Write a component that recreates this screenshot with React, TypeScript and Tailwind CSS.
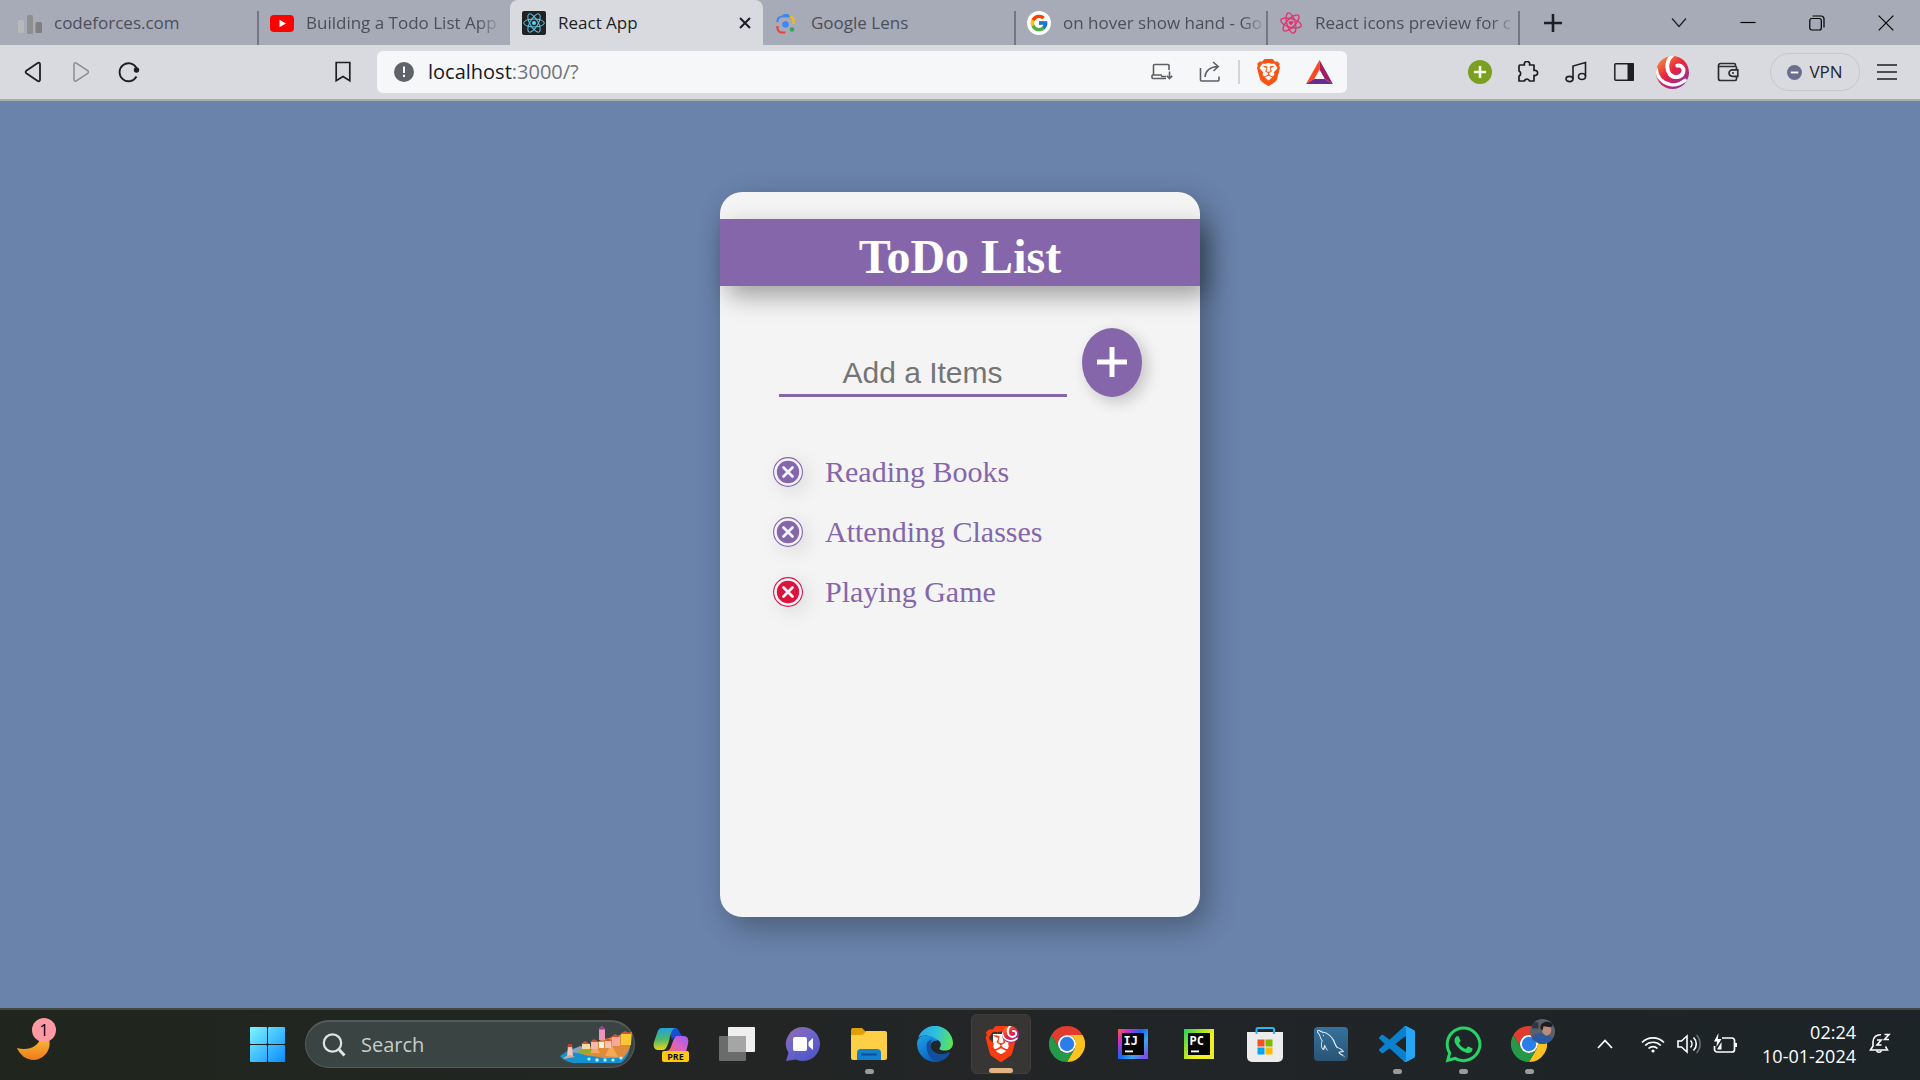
import React, { useState } from "react";
import { FcGoogle } from "react-icons/fc";
import { SiBrave } from "react-icons/si";
import { FaWhatsapp } from "react-icons/fa";
import { GrMysql } from "react-icons/gr";

type IconProps = { className?: string };

/* ---------- Favicons ---------- */

function BarsFavicon() {
  return (
    <svg viewBox="0 0 24 24" className="size-6">
      <rect x="0" y="9" width="6" height="13" rx="1.5" fill="#b9b9b9" />
      <rect x="9" y="4" width="6" height="19" rx="1.5" fill="#8f8f8f" />
      <rect x="17.5" y="11" width="6.5" height="11" rx="1.5" fill="#7f7f7f" />
    </svg>
  );
}

function YoutubeFavicon() {
  return (
    <svg viewBox="0 0 24 24" className="size-6">
      <rect x="0" y="4" width="24" height="17" rx="4" fill="#ff0000" />
      <path d="M9.5 8.8 16 12.500l-6.5 3.7z" fill="#fff" />
    </svg>
  );
}

function ReactFavicon() {
  return (
    <svg viewBox="0 0 24 24" className="size-6">
      <rect width="24" height="24" rx="2" fill="#222" />
      <g fill="none" stroke="#5fc9e8" strokeWidth="1">
        <ellipse cx="12" cy="12" rx="10.3" ry="4" />
        <ellipse cx="12" cy="12" rx="10.3" ry="4" transform="rotate(60 12 12)" />
        <ellipse cx="12" cy="12" rx="10.3" ry="4" transform="rotate(120 12 12)" />
      </g>
      <circle cx="12" cy="12" r="2" fill="#5fd4f4" />
    </svg>
  );
}

function LensFavicon() {
  return (
    <svg viewBox="0 0 24 24" className="size-6">
      <g fill="none" strokeWidth="2.2">
        <path d="M2.500 11V10a4.500 4.500 0 0 1 4.500-4.500H15" stroke="#4285f4" />
        <path d="M14.500 5.500A4.500 4.500 0 0 1 18.500 10v3" stroke="#fbbc04" />
        <path d="M2.500 15v2a4.500 4.500 0 0 0 4.500 4.500H10.500" stroke="#ea4335" />
      </g>
      <path d="M6.500 6 8.500 3h4.500l2 3z" fill="#4285f4" />
      <circle cx="10.500" cy="13.500" r="3.300" fill="#4285f4" />
      <circle cx="17" cy="18.500" r="2.300" fill="#34a853" />
    </svg>
  );
}

function GoogleFavicon() {
  return (
    <span className="flex size-6 items-center justify-center rounded-full bg-white">
      <FcGoogle className="size-5" />
    </span>
  );
}

function PinkAtomFavicon() {
  return (
    <svg viewBox="0 0 24 24" className="size-6">
      <g fill="none" stroke="#e0336f" strokeWidth="1.300" transform="rotate(15 12 12)">
        <ellipse cx="12" cy="12" rx="10.500" ry="4.200" />
        <ellipse cx="12" cy="12" rx="10.500" ry="4.200" transform="rotate(60 12 12)" />
        <ellipse cx="12" cy="12" rx="10.500" ry="4.200" transform="rotate(120 12 12)" />
      </g>
      <path d="M12 14.300 9.900 12.200a1.300 1.300 0 0 1 2.100-1.600 1.300 1.300 0 0 1 2.100 1.600z" fill="#e0336f" />
    </svg>
  );
}

/* ---------- Browser chrome ---------- */

type Tab = { title: string; icon: React.ReactNode; active?: boolean; divider?: boolean; long?: boolean };

const tabs: Tab[] = [
  { title: "codeforces.com", icon: <BarsFavicon />, divider: true },
  { title: "Building a Todo List App", icon: <YoutubeFavicon />, long: true },
  { title: "React App", icon: <ReactFavicon />, active: true },
  { title: "Google Lens", icon: <LensFavicon />, divider: true },
  { title: "on hover show hand - Go", icon: <GoogleFavicon />, divider: true, long: true },
  { title: "React icons preview for c", icon: <PinkAtomFavicon />, divider: true, long: true },
];

function TabStrip() {
  return (
    <div className="flex h-[45px] shrink-0 bg-[#a7abb8] pl-1.5">
      <div role="tablist" className="flex min-w-0">
        {tabs.map((tab) => (
          <div
            key={tab.title}
            className={
              tab.active
                ? "flex w-[253px] min-w-0 items-center rounded-t-lg bg-[#d9dadf] pr-2 pl-3"
                : "relative flex w-[252px] min-w-0 items-center pr-1 pl-3"
            }
          >
            <button role="tab" aria-selected={!!tab.active} className="flex min-w-0 flex-1 items-center gap-3 text-left">
              <span className="shrink-0">{tab.icon}</span>
              <span
                className={
                  tab.long
                    ? "text-[17px] leading-6 whitespace-nowrap text-[#4c4f58] [mask-image:linear-gradient(to_right,#000_90%,rgba(0,0,0,0.2))]"
                    : tab.active
                      ? "text-[17px] leading-6 font-medium whitespace-nowrap text-[#1d1f25]"
                      : "text-[17px] leading-6 whitespace-nowrap text-[#4c4f58]"
                }
              >
                {tab.title}
              </span>
            </button>
            {tab.active && (
              <button aria-label="Close tab" className="flex size-5 items-center justify-center">
                <svg viewBox="0 0 12 12" className="size-3">
                  <path d="M1 1l10 10M11 1 1 11" stroke="#1d1f25" strokeWidth="2" />
                </svg>
              </button>
            )}
            {tab.divider && <span className="absolute -right-px bottom-0 h-[34px] w-0.5 bg-[#737782]" />}
          </div>
        ))}
      </div>
      <button aria-label="New tab" className="ml-2.5 flex w-12 items-center justify-center">
        <svg viewBox="0 0 18 18" className="size-[18px]">
          <path d="M9 0v18M0 9h18" stroke="#1d1f25" strokeWidth="2.600" />
        </svg>
      </button>
      <div className="ml-auto flex">
        <button aria-label="Search tabs" className="flex w-[69px] items-center justify-center">
          <svg viewBox="0 0 16 16" className="size-4" fill="none" stroke="#1d1f25" strokeWidth="1.200">
            <path d="m1 3.500 7 8 7-8" />
          </svg>
        </button>
        <button aria-label="Minimize" className="flex w-[69px] items-center justify-center">
          <svg viewBox="0 0 16 16" className="size-4" stroke="#000" strokeWidth="1.200">
            <path d="M.5 7.500h15" />
          </svg>
        </button>
        <button aria-label="Restore" className="flex w-[69px] items-center justify-center">
          <svg viewBox="0 0 16 16" className="size-4" fill="none" stroke="#000" strokeWidth="1.200">
            <rect x=".8" y="3.500" width="11.500" height="11.500" rx="2" />
            <path d="M3.500 1h8.500a3 3 0 0 1 3 3v8.500" />
          </svg>
        </button>
        <button aria-label="Close" className="flex w-[69px] items-center justify-center">
          <svg viewBox="0 0 16 16" className="size-4" stroke="#000" strokeWidth="1.200">
            <path d="M.7.7l14.600 14.600M15.300.7.7 15.300" />
          </svg>
        </button>
      </div>
    </div>
  );
}

function ToolButton({ label, children, className }: { label: string; children: React.ReactNode; className: string }) {
  return (
    <button aria-label={label} className={className}>
      {children}
    </button>
  );
}

const slot = "flex h-10 w-12 shrink-0 items-center justify-center";

function TriangleAd() {
  return (
    <svg viewBox="0 0 28 26" className="h-[25px] w-[27px]">
      <path d="M14 0 0 25l8.500-5.200L14 10z" fill="#ff4724" />
      <path d="M14 0l14 25-8.500-5.200L14 10z" fill="#9e1f63" />
      <path d="M0 25h28l-8.500-5.200h-11z" fill="#662d91" />
    </svg>
  );
}

function Swirl({ className }: IconProps) {
  return (
    <svg viewBox="0 0 34 34" className={className}>
      <defs>
        <linearGradient id="swirl" x1="0" y1="0" x2=".8" y2="1">
          <stop offset="0" stopColor="#f9a13b" />
          <stop offset=".5" stopColor="#e8243f" />
          <stop offset="1" stopColor="#8c2fa8" />
        </linearGradient>
        <clipPath id="swirlclip">
          <circle cx="17" cy="17" r="17" />
        </clipPath>
      </defs>
      <g clipPath="url(#swirlclip)">
        <rect width="34" height="34" fill="url(#swirl)" />
        <g fill="none" stroke="#fff" strokeLinecap="round">
          <path d="M17-1C11 4 10 13 14 18.500c4 5 12 4 14-1.500 1.500-5-2.500-8-6-7" strokeWidth="4" />
          <path d="M0 13c1 9 7 15 15 16.500 5 .8 10-.5 15-4.500" strokeWidth="3.500" />
        </g>
      </g>
    </svg>
  );
}

function Toolbar() {
  return (
    <div className="flex h-14 shrink-0 items-center border-b-2 border-[#a9abb0] bg-[#d9dadf] pr-2.5 pl-[9px]">
      <ToolButton label="Back" className={slot}>
        <svg viewBox="0 0 18 22" className="h-[22px] w-[18px]" fill="none" stroke="#1d1f25" strokeWidth="1.800">
          <path d="M16 3.200v15.600c0 1.400-1.300 1.900-2.300 1.100L2.300 12.300a1.600 1.600 0 0 1 0-2.600L13.700 2.100c1-.8 2.300-.3 2.300 1.100z" />
        </svg>
      </ToolButton>
      <ToolButton label="Forward" className={slot}>
        <svg viewBox="0 0 18 22" className="h-[22px] w-[18px]" fill="none" stroke="#8b8d93" strokeWidth="1.500">
          <path d="M2 3.200v15.600c0 1.400 1.300 1.900 2.300 1.100l11.400-7.600a1.600 1.600 0 0 0 0-2.600L4.300 2.100C3.300 1.300 2 1.800 2 3.200z" />
        </svg>
      </ToolButton>
      <ToolButton label="Reload" className={slot}>
        <svg viewBox="0 0 22 22" className="size-[22px]">
          <path d="M18.500 15.500A9 9 0 1 1 18.500 7" fill="none" stroke="#1d1f25" strokeWidth="1.800" />
          <circle cx="18.500" cy="9" r="2.700" fill="#1d1f25" />
        </svg>
      </ToolButton>
      <ToolButton label="Bookmark this page" className={"ml-[166px] " + slot}>
        <svg viewBox="0 0 16 22" className="h-[22px] w-4" fill="none" stroke="#1d1f25" strokeWidth="1.700">
          <path d="M1.200 1.500h13.600v18.300L8 15.500l-6.800 4.300z" />
        </svg>
      </ToolButton>
      <div className="ml-2.5 flex h-[42px] min-w-0 flex-1 items-center rounded-md bg-[#f6f7f9] pl-[17px]">
        <svg viewBox="0 0 22 22" className="size-5 shrink-0">
          <circle cx="11" cy="11" r="11" fill="#5f6268" />
          <path d="M11 5v7M11 14v2.500" stroke="#fff" strokeWidth="2.200" />
        </svg>
        <button className="ml-3.5 flex-1 text-left text-xl leading-7 text-[#70737a]">
          <span className="text-[#17191f]">localhost</span>:3000/?
        </button>
        <ToolButton label="Install app" className={slot}>
          <svg viewBox="0 0 22 18" className="h-[18px] w-[22px]" fill="none" stroke="#5c5f66" strokeWidth="1.600">
            <path d="M18 7V2.500a1 1 0 0 0-1-1H3.500a1 1 0 0 0-1 1V12M1 12h9l1 1.500h4M1 12v2.500a1 1 0 0 0 1 1h13" />
            <path d="M18.500 8.500v7M15.700 12.800l2.800 2.800 2.800-2.800" />
          </svg>
        </ToolButton>
        <ToolButton label="Share" className={slot}>
          <svg viewBox="0 0 22 22" className="size-[22px]" fill="none" stroke="#5c5f66" strokeWidth="1.600">
            <path d="M1.500 7v12a1 1 0 0 0 1 1h16.500a1 1 0 0 0 1-1v-3.500" />
            <path d="M6 16c.5-6 4-10 13-10.500M14 1l5.200 4.500L14.500 10" />
          </svg>
        </ToolButton>
        <span className="ml-1 h-6 w-0.5 bg-[#d3d5da]" />
        <ToolButton label="Brave Shields" className="ml-1 flex h-10 w-12 items-center justify-center">
          <SiBrave className="size-[27px] text-[#fb5412]" />
        </ToolButton>
        <ToolButton label="Brave Rewards" className="flex h-10 w-[55px] items-center justify-center">
          <TriangleAd />
        </ToolButton>
      </div>
      <div className="ml-[109px] flex items-center">
        <ToolButton label="Extension" className={slot}>
          <svg viewBox="0 0 24 24" className="size-6">
            <circle cx="12" cy="12" r="12" fill="#7aa022" />
            <path d="M12 6v12M6 12h12" stroke="#f4f8ea" strokeWidth="2.600" />
          </svg>
        </ToolButton>
        <ToolButton label="Extensions" className={slot}>
          <svg viewBox="0 0 22 22" className="size-[22px]" fill="none" stroke="#1d1f25" strokeWidth="1.700" strokeLinejoin="round">
            <path d="M3 4h4.500a2.700 2.700 0 1 1 5 0H17v5.500a2.600 2.600 0 1 1 0 4.800V20h-4.500a2.600 2.600 0 0 0-5 0H2v-5a2.700 2.700 0 0 0 0-5V5a1 1 0 0 1 1-1z" />
          </svg>
        </ToolButton>
        <ToolButton label="Media controls" className={slot}>
          <svg viewBox="0 0 22 22" className="size-[22px]" fill="none" stroke="#1d1f25" strokeWidth="1.600">
            <path d="M8 18V5l12.500-3.500v14" />
            <ellipse cx="4.500" cy="18" rx="3.500" ry="2.600" />
            <ellipse cx="17" cy="15.500" rx="3.500" ry="3" />
          </svg>
        </ToolButton>
        <ToolButton label="Side panel" className={slot}>
          <svg viewBox="0 0 20 18" className="h-[18px] w-5">
            <rect x=".8" y=".8" width="18.400" height="16.400" rx="1" fill="none" stroke="#1d1f25" strokeWidth="1.500" />
            <rect x="13.500" y="0" width="6.500" height="18" rx="1" fill="#1d1f25" />
          </svg>
        </ToolButton>
        <ToolButton label="Profile" className={slot}>
          <Swirl className="size-[33px]" />
        </ToolButton>
        <ToolButton label="Wallet" className="ml-2 flex h-10 w-12 items-center justify-center">
          <svg viewBox="0 0 22 20" className="h-5 w-[22px]" fill="none" stroke="#2b2d33" strokeWidth="1.700">
            <path d="M1.500 3.500v13a2 2 0 0 0 2 2h14.500a1.500 1.500 0 0 0 1.500-1.500v-2.500M1.500 3.500a2 2 0 0 1 2-2H17a1.500 1.500 0 0 1 1.500 1.500v1.500M1.500 4.500h17a1 1 0 0 1 1 1v2" />
            <path d="M20.800 7.800h-5.500a3.100 3.100 0 0 0 0 6.500h5.500zM15 11h2" />
          </svg>
        </ToolButton>
      </div>
      <button className="ml-[18px] flex h-[38px] w-[90px] shrink-0 items-center justify-center gap-[7px] rounded-full border border-[#c6c8cd] text-[17px] text-[#24262c]">
        <svg viewBox="0 0 16 16" className="size-[15px]">
          <circle cx="8" cy="8" r="8" fill="#6b6f8f" />
          <path d="M4 8h8" stroke="#fff" strokeWidth="2" />
        </svg>
        VPN
      </button>
      <ToolButton label="Menu" className="ml-1 flex h-10 w-[46px] items-center justify-center">
        <svg viewBox="0 0 20 16" className="h-4 w-5" stroke="#1d1f25" strokeWidth="1.600">
          <path d="M0 1h20M0 8h20M0 15h20" />
        </svg>
      </ToolButton>
    </div>
  );
}

/* ---------- ToDo application ---------- */

const initialItems = ["Reading Books", "Attending Classes", "Playing Game"];

function TodoCard() {
  const [items, setItems] = useState(initialItems);
  const [text, setText] = useState("");

  const addItem = () => {
    if (text.trim()) {
      setItems([...items, text]);
      setText("");
    }
  };

  return (
    <section className="h-4/5 w-1/4 min-w-[420px] rounded-[22px] bg-[#f4f4f4] pt-[27px] font-['Liberation_Serif',serif] shadow-[8px_10px_30px_rgba(0,0,0,0.3)]">
      <h1 className="bg-[#8566aa] pt-2.5 pb-0.5 text-center text-5xl leading-[55px] font-bold text-white shadow-[8px_10px_25px_rgba(0,0,0,0.35)]">
        ToDo List
      </h1>
      <div className="mt-[42px] flex items-end justify-center gap-[15px]">
        <input
          aria-label="Add a Items"
          placeholder="Add a Items"
          value={text}
          onChange={(e) => setText(e.target.value)}
          className="h-12 w-3/5 border-b-[3px] border-[#8566aa] bg-transparent pt-1 text-center font-['Liberation_Sans',sans-serif] text-[30px] text-[#8566aa] outline-none placeholder:text-[#757575]"
        />
        <button
          aria-label="Add item"
          onClick={addItem}
          className="flex h-[69px] w-[60px] items-center justify-center rounded-[50%] bg-[#8566aa] shadow-[5px_5px_15px_rgba(0,0,0,0.2)]"
        >
          <svg viewBox="0 0 30 30" className="size-[30px]">
            <path d="M15 0v30M0 15h30" stroke="#fff" strokeWidth="5" />
          </svg>
        </button>
      </div>
      <ul className="mt-[45px] pl-[53px]">
        {items.map((item, index) => (
          <li key={index} className="flex h-15 items-center gap-[22px] text-[30px] text-[#8566aa]">
            <button
              aria-label={"Delete " + item}
              onClick={() => setItems(items.filter((_, i) => i !== index))}
              className={
                index === 2
                  ? "rounded-full text-[#dc143c] shadow-[5px_5px_20px_rgba(0,0,0,0.1)]"
                  : "rounded-full text-[#8566aa] shadow-[5px_5px_20px_rgba(0,0,0,0.1)]"
              }
            >
              <svg viewBox="0 0 30 30" className="size-[30px]">
                <circle cx="15" cy="15" r="14.400" fill="#f3f3fd" stroke="currentColor" strokeWidth="1.100" />
                <circle cx="15" cy="15" r="11.200" fill="currentColor" />
                <path d="m10.500 10.500 9 9M19.500 10.500l-9 9" stroke="#f3f3fd" strokeWidth="2.800" strokeLinecap="round" />
              </svg>
            </button>
            <span>{item}</span>
          </li>
        ))}
      </ul>
    </section>
  );
}

/* ---------- Taskbar icons ---------- */

function ChromeIcon() {
  return (
    <svg viewBox="0 0 48 48" className="size-9">
      <path d="M24 0A24 24 0 0 0 3.200 12L13.600 30A12 12 0 0 1 24 12H44.800A24 24 0 0 0 24 0z" fill="#e33b2e" />
      <path d="M44.800 12H24A12 12 0 0 1 34.400 30L24 48A24 24 0 0 0 44.800 12z" fill="#fcc31e" />
      <path d="M3.200 12 13.600 30A12 12 0 0 0 34.400 30L24 48A24 24 0 0 1 3.200 12z" fill="#249a48" />
      <circle cx="24" cy="24" r="12" fill="#fff" />
      <circle cx="24" cy="24" r="9.600" fill="#2b7de9" />
    </svg>
  );
}

function WindowsIcon() {
  return (
    <svg viewBox="0 0 35 35" className="size-[35px]">
      <defs>
        <linearGradient id="win" x1="0" y1="0" x2="35" y2="35" gradientUnits="userSpaceOnUse">
          <stop offset="0" stopColor="#7df6ff" />
          <stop offset="1" stopColor="#0a8bff" />
        </linearGradient>
      </defs>
      <g fill="url(#win)">
        <rect width="17" height="17" rx="1" />
        <rect x="18" width="17" height="17" rx="1" />
        <rect y="18" width="17" height="17" rx="1" />
        <rect x="18" y="18" width="17" height="17" rx="1" />
      </g>
    </svg>
  );
}

function CoastIllustration() {
  return (
    <svg viewBox="0 0 73 38" className="h-[38px] w-[73px] shrink-0">
      <path d="M1 30c8-6 14-9 24-9h46c-1 7-4 12-9 16H14C8 36 3 33 1 30z" fill="#1591d0" />
      <path d="M9 26l12-6 10 2-4 6z" fill="#8c9fb8" />
      <path d="M20 27l14-8 8-5 31-8c0 12-3 20-9 26H44c-6-2-14-1-24-5z" fill="#e08a3c" />
      <path d="M31 27l5-8 5 8zM46 30l6-12 7 13z" fill="#f4a85a" />
      <g>
        <rect x="23" y="18" width="8" height="5" fill="#f7d7b0" />
        <rect x="32" y="16" width="7" height="7" fill="#f4b9a8" />
        <rect x="40" y="16" width="5" height="6" fill="#fff0e2" />
        <rect x="46" y="15" width="6" height="7" fill="#f5c2b4" />
        <rect x="53" y="11" width="8" height="9" fill="#f6a79c" />
        <rect x="62" y="8" width="10" height="11" fill="#f8c835" />
        <path d="M22 18l4-3 5 3zM31 16l4-3 5 3zM45 15l4-3 4 3zM52 11l4-3 5 3zM61 8l5-3 7 3z" fill="#d5522f" />
      </g>
      <path d="M40 14V3l3-3 3 3v11z" fill="#ef93bd" />
      <path d="M39.500 3.500 43 0l3.500 3.500z" fill="#8b3f9c" />
      <path d="M8 31l1-12h4l1 12z" fill="#f2c5b8" />
      <path d="M9 18h4v3H9z" fill="#cf3b3b" />
      <path d="M4 33c2-4 8-5 12-2z" fill="#c9a998" />
      <g fill="#bfeefa">
        <circle cx="30" cy="33" r="1.600" />
        <circle cx="38" cy="34" r="1.800" />
        <circle cx="46" cy="34" r="1.700" />
        <circle cx="54" cy="34" r="1.600" />
        <circle cx="62" cy="32" r="1.600" />
      </g>
      <path d="M20 23h12v4H20z" fill="#8fae2b" />
    </svg>
  );
}

function CopilotIcon() {
  return (
    <svg viewBox="0 0 36 36" className="size-9">
      <defs>
        <linearGradient id="cpl" x1="0" y1="0" x2=".1" y2="1">
          <stop offset="0" stopColor="#1e9fe8" />
          <stop offset=".55" stopColor="#4db86a" />
          <stop offset="1" stopColor="#e4d31c" />
        </linearGradient>
        <linearGradient id="cpr" x1="1" y1="0" x2="0" y2="1">
          <stop offset="0" stopColor="#9a5cf5" />
          <stop offset=".5" stopColor="#d963c5" />
          <stop offset="1" stopColor="#fb6a55" />
        </linearGradient>
      </defs>
      <path d="M16 2h7c3 0 4 8 8 9h-8c-2 0-3 1-4 3z" fill="#164fd1" />
      <path d="M9 2h14c-4 0-5 5-6.500 11S13 24 10 24H5c-4 0-5-4-4-8L4.500 6C5.500 3.500 6.500 2 9 2z" fill="url(#cpl)" />
      <path d="M24 10h7c4 0 5 4 4 8l-2 8H11l5-2c3-2 4-14 8-14z" fill="url(#cpr)" />
      <rect x="9" y="25" width="27" height="11" rx="2" fill="#ffc90e" />
      <text x="22.500" y="33.600" textAnchor="middle" fontSize="9" fontWeight="700" fill="#111">PRE</text>
    </svg>
  );
}

function TaskViewIcon() {
  return (
    <svg viewBox="0 0 36 36" className="size-9">
      <rect x="9" y="1" width="27" height="25" rx="1" fill="#efefef" />
      <rect x="0" y="10" width="27" height="25" rx="1" fill="#6a6b6b" />
      <rect x="9" y="10" width="18" height="16" fill="#a5a5a5" />
    </svg>
  );
}

function ChatIcon() {
  return (
    <svg viewBox="0 0 36 36" className="size-9">
      <defs>
        <linearGradient id="chat" x1="0" y1="0" x2=".7" y2="1">
          <stop offset="0" stopColor="#9668a8" />
          <stop offset=".5" stopColor="#6b66cc" />
          <stop offset="1" stopColor="#4f55c4" />
        </linearGradient>
      </defs>
      <path d="M18 1a17 17 0 1 1-7 32.500L1 35l2.500-8A17 17 0 0 1 18 1z" fill="url(#chat)" />
      <rect x="8" y="11" width="14" height="14" rx="2" fill="#fff" />
      <path d="m23.500 16 4.500-4v12l-4.500-4z" fill="#fff" />
    </svg>
  );
}

function FolderIcon() {
  return (
    <svg viewBox="0 0 36 36" className="size-9">
      <path d="M0 4a2 2 0 0 1 2-2h9l4 4h18v6H0z" fill="#dfa000" />
      <path d="M0 9l12-.2L15 5h19a2 2 0 0 1 2 2v25a2 2 0 0 1-2 2H2a2 2 0 0 1-2-2z" fill="#ffcf48" />
      <path d="M6 34V27a4 4 0 0 1 4-4h16a4 4 0 0 1 4 4v7z" fill="#1380cf" />
      <path d="M11 28.500h14" stroke="#0a4d94" strokeWidth="2" strokeLinecap="round" />
    </svg>
  );
}

function EdgeIcon() {
  return (
    <svg viewBox="0 0 36 36" className="size-9">
      <defs>
        <linearGradient id="edgeTop" x1="0" y1=".3" x2="1" y2=".5">
          <stop offset="0" stopColor="#2aa5e8" />
          <stop offset=".5" stopColor="#2fc1dc" />
          <stop offset="1" stopColor="#5be35a" />
        </linearGradient>
        <linearGradient id="edgeLow" x1="0" y1="0" x2=".5" y2="1">
          <stop offset="0" stopColor="#1fa2e6" />
          <stop offset="1" stopColor="#0a64c2" />
        </linearGradient>
      </defs>
      <path d="M1 12A18 18 0 0 1 36 17c0 5-4 8-8.500 7.500-3 0-5.500-1-5-2.500 2.500-2.500 1.500-8-4-8.500C12 8 4 9 1 12z" fill="url(#edgeTop)" />
      <path d="M0 18C0 12 4 9.500 9 9.500c6 0 10.500 3 11.500 5.500-5-1-7.500 3-7.500 7 0 5 4 10 9.500 13.300A18 18 0 0 1 0 18z" fill="url(#edgeLow)" />
      <path d="M9.500 20c0-4 2.500-6.500 6-6.500-2 2-2.500 5-1.500 8 2 6 10 8.500 17 5 1.500-.7 2.500.2 1.700 1.300A18 18 0 0 1 21 36c-7-1.500-11.500-8-11.500-16z" fill="#11509c" />
    </svg>
  );
}

function BraveTaskIcon() {
  return (
    <span className="relative flex size-9 items-center justify-center">
      <span className="absolute top-2 left-2.5 h-5 w-4 rounded-b-full bg-white" />
      <SiBrave className="relative size-9 text-[#fb3b10]" />
      <Swirl className="absolute top-0 right-0 size-[17px]" />
    </span>
  );
}

function JetbrainsIcon({ label, id, stops }: { label: string; id: string; stops: string[] }) {
  return (
    <svg viewBox="0 0 30 30" className="size-[30px]">
      <defs>
        <linearGradient id={id} x1="0" y1="0" x2="1" y2=".8">
          {stops.map((color, i) => (
            <stop key={color} offset={i / (stops.length - 1)} stopColor={color} />
          ))}
        </linearGradient>
      </defs>
      <rect width="30" height="30" fill={"url(#" + id + ")"} />
      <rect x="4" y="4" width="22" height="22" fill="#050505" />
      <text x="5.500" y="15.500" fontSize="12" fontWeight="700" fill="#fff" fontFamily="DejaVu Sans Mono, monospace">{label}</text>
      <rect x="7" y="21.500" width="8" height="1.800" fill="#fff" />
    </svg>
  );
}

function StoreIcon() {
  return (
    <svg viewBox="0 0 36 36" className="size-9">
      <path d="M0 6h36v25a5 5 0 0 1-5 5H5a5 5 0 0 1-5-5z" fill="#ececec" />
      <path d="M9.500 8V3.500a1.500 1.500 0 0 1 1.500-1.500h14.500A1.500 1.500 0 0 1 27 3.500V8" fill="none" stroke="#2bb5ee" strokeWidth="2" />
      <rect x="10.500" y="13.500" width="7" height="7" fill="#f25022" />
      <rect x="18.500" y="13.500" width="7" height="7" fill="#7fba00" />
      <rect x="10.500" y="21.500" width="7" height="7" fill="#00a4ef" />
      <rect x="18.500" y="21.500" width="7" height="7" fill="#ffb900" />
    </svg>
  );
}

function WorkbenchIcon() {
  return (
    <span className="flex size-[34px] items-center justify-center rounded-[4px] bg-linear-to-b from-[#34729f] to-[#2a5474] text-[#eaf4fb]">
      <GrMysql className="size-7" />
    </span>
  );
}

function CodeIcon() {
  return (
    <svg viewBox="0 0 24 24" className="size-9">
      <path
        fill="#0b80cc"
        d="M23.150 2.587L18.210.21a1.494 1.494 0 0 0-1.705.29l-9.460 8.630-4.120-3.128a.999.999 0 0 0-1.276.057L.327 7.261A1 1 0 0 0 .326 8.740L3.899 12 .326 15.260a1 1 0 0 0 .001 1.479L1.650 17.940a.999.999 0 0 0 1.276.057l4.120-3.128 9.460 8.630a1.492 1.492 0 0 0 1.704.29l4.942-2.377A1.500 1.500 0 0 0 24 20.060V3.939a1.500 1.500 0 0 0-.85-1.352zm-5.146 14.861L10.826 12l7.178-5.448v10.896z"
      />
      <path d="M18.004 1.500V22.500l-1 1.300c.4.200.8.200 1.200 0l4.946-2.390A1.500 1.500 0 0 0 24 20.060V3.939a1.500 1.500 0 0 0-.85-1.352L18.210.21c-.4-.2-.8-.2-1.200 0z" fill="#27a5f3" />
    </svg>
  );
}

function ChromeProfileIcon() {
  return (
    <span className="relative">
      <ChromeIcon />
      <svg viewBox="0 0 24 24" className="absolute -top-[7px] -right-2 size-[25px]">
        <clipPath id="avatar">
          <circle cx="12" cy="12" r="12" />
        </clipPath>
        <g clipPath="url(#avatar)">
          <rect width="24" height="24" fill="#59616b" />
          <path d="M0 24C1 15 7 12 13 14c6 1 9 4 9 10z" fill="#2c5a9e" />
          <ellipse cx="16" cy="10" rx="4.500" ry="6" fill="#b98c7c" />
          <path d="M10 9c-1-6 9-9 12-3l-2 2-7-1-1 4z" fill="#1e1c22" />
          <path d="M2 3h6v6H2z" fill="#31363d" />
        </g>
      </svg>
    </span>
  );
}

type App = { name: string; icon: React.ReactNode; state?: "open" | "focused" };

const apps: App[] = [
  { name: "Copilot", icon: <CopilotIcon /> },
  { name: "Task view", icon: <TaskViewIcon /> },
  { name: "Chat", icon: <ChatIcon /> },
  { name: "File Explorer", icon: <FolderIcon />, state: "open" },
  { name: "Edge", icon: <EdgeIcon /> },
  { name: "Brave", icon: <BraveTaskIcon />, state: "focused" },
  { name: "Chrome", icon: <ChromeIcon /> },
  { name: "IntelliJ IDEA", icon: <JetbrainsIcon label="IJ" id="ij" stops={["#fc5a3a", "#c22fd0", "#1268f4", "#3aa6ee", "#7a4ff0"]} /> },
  { name: "PyCharm", icon: <JetbrainsIcon label="PC" id="pc" stops={["#1fd760", "#8fe02e", "#f4f01c", "#e9ee2c"]} /> },
  { name: "Microsoft Store", icon: <StoreIcon /> },
  { name: "MySQL Workbench", icon: <WorkbenchIcon /> },
  { name: "VS Code", icon: <CodeIcon />, state: "open" },
  { name: "WhatsApp", icon: <FaWhatsapp className="size-[41px] text-[#25d366]" />, state: "open" },
  { name: "Chrome profile", icon: <ChromeProfileIcon />, state: "open" },
];

function Taskbar() {
  return (
    <footer className="flex h-[72px] shrink-0 items-center border-t-2 border-[#444845] bg-linear-to-r from-[#20261d] via-[#232526] to-[#1c2427] pb-0.5 text-white">
      <button aria-label="Weather" className="relative ml-4 size-12 shrink-0">
        <svg viewBox="0 0 48 48" className="size-12">
          <defs>
            <linearGradient id="moon" x1="0" y1="0" x2="0" y2="1">
              <stop offset="0" stopColor="#f9c13a" />
              <stop offset="1" stopColor="#ee7a1c" />
            </linearGradient>
          </defs>
          <path d="M32 16c5 11-2 23-14 24-8 0-14-5-17-12 11 3 22-1 24-12z" fill="url(#moon)" />
        </svg>
        <span className="absolute -top-0.5 right-2 flex size-6 items-center justify-center rounded-full bg-[#ff99a4] text-base text-black">1</span>
      </button>
      <div className="ml-[173px] flex items-center">
        <button aria-label="Start" className="flex size-[60px] shrink-0 items-center justify-center">
          <WindowsIcon />
        </button>
        <label className="ml-2 flex h-12 w-[330px] min-w-0 items-center rounded-full border border-t-2 border-[#555b5b] bg-[#3a4442] pr-0.5 pl-4">
          <svg viewBox="0 0 24 24" className="size-6 shrink-0" fill="none" stroke="#dfe3e6" strokeWidth="2.200">
            <circle cx="10.500" cy="10" r="8.700" />
            <path d="m17 16.500 5.500 6" strokeWidth="3" />
          </svg>
          <input aria-label="Search" placeholder="Search" className="ml-[15px] w-full min-w-0 bg-transparent text-xl outline-none placeholder:text-[#c8cccb]" />
          <CoastIllustration />
        </label>
        <nav aria-label="Applications" className="ml-1.5 flex gap-1.5">
          {apps.map((app) => (
            <button
              key={app.name}
              aria-label={app.name}
              className={
                app.state === "focused"
                  ? "relative flex size-[60px] items-center justify-center rounded-md border border-[#403f3e] bg-[#373635]"
                  : "relative flex size-[60px] items-center justify-center"
              }
            >
              {app.icon}
              {app.state === "focused" && <span className="absolute bottom-0 h-[5px] w-6 rounded-full bg-[#e0b582]" />}
              {app.state === "open" && <span className="absolute bottom-0 h-[5px] w-[9px] rounded-full bg-[#9a9c9c]" />}
            </button>
          ))}
        </nav>
      </div>
      <div className="ml-auto flex items-center pr-7">
        <button aria-label="Show hidden icons" className="mr-5 flex h-12 w-8 items-center justify-center">
          <svg viewBox="0 0 16 10" className="h-2.5 w-4" fill="none" stroke="#fff" strokeWidth="1.800">
            <path d="m1 9 7-7.500L15 9" />
          </svg>
        </button>
        <button aria-label="Network, volume and battery" className="flex h-12 items-center gap-3">
          <svg viewBox="0 0 24 18" className="h-[18px] w-6" fill="none" stroke="#fff" strokeWidth="1.700">
            <path d="M1 7.500a15.500 15.500 0 0 1 22 0M4.200 10.500a11 11 0 0 1 15.600 0M7.500 13.500a6.500 6.500 0 0 1 9 0" />
            <circle cx="12" cy="16" r="1.600" fill="#fff" stroke="none" />
          </svg>
          <svg viewBox="0 0 24 20" className="h-5 w-6" fill="none" stroke="#fff" strokeWidth="1.600">
            <path d="M1 7h3.500L10 2v16l-5.500-5H1z" />
            <path d="M13.500 6.500a5 5 0 0 1 0 7M16.500 3.500a9 9 0 0 1 0 13" />
            <path d="M19.500 1a13 13 0 0 1 0 18" stroke="#6b7073" />
          </svg>
          <svg viewBox="0 0 25 22" className="h-[22px] w-[25px]" fill="none" stroke="#fff" strokeWidth="1.700">
            <path d="M9 5h10a2.500 2.500 0 0 1 2.500 2.500v9A2.500 2.500 0 0 1 19 19H4a2.500 2.500 0 0 1-2.500-2.500V13" />
            <path d="M22 10h2v4h-2z" fill="#fff" stroke="none" />
            <path d="M5.500 0 1 8.500h3L3.500 14 8.500 6H5z" fill="#fff" stroke="none" />
            <path d="M4 16.500h4.500V9z" fill="#fff" stroke="none" />
          </svg>
        </button>
        <button className="ml-6 text-right text-lg leading-6">
          02:24
          <br />
          10-01-2024
        </button>
        <button aria-label="Notifications" className="ml-3 flex h-12 w-6 items-center justify-center">
          <svg viewBox="0 0 22 22" className="size-[22px]" fill="none" stroke="#fff" strokeWidth="1.600">
            <path d="M12 1.800C7 1.500 4 4.500 4 8.500V13l-2.500 4h17L16.500 13.500" />
            <path d="M7.500 17.500a2.700 2.700 0 0 0 5 0" />
            <path d="M8 7h4.200L8 12h4.500M15.500 1.500H20l-4.500 5H20" />
          </svg>
        </button>
      </div>
    </footer>
  );
}

export default function App() {
  return (
    <div className="flex h-screen flex-col overflow-hidden bg-[#6a83ab] font-['Open_Sans',sans-serif]">
      <header>
        <TabStrip />
        <Toolbar />
      </header>
      <main className="flex min-h-0 flex-1 items-center justify-center">
        <TodoCard />
      </main>
      <Taskbar />
    </div>
  );
}
